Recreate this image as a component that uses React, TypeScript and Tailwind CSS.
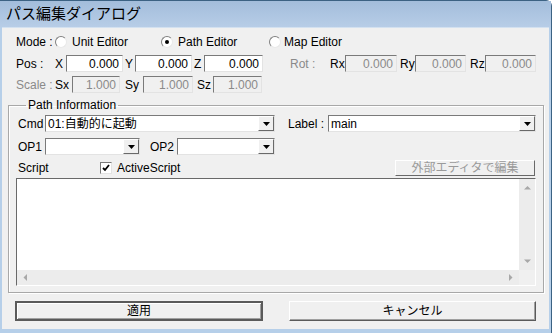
import React from "react";

const font = "font-['MS_UI_Gothic','Liberation_Sans','Noto_Sans_CJK_JP',sans-serif]";

const Radio = ({ checked }: { checked?: boolean }) => (
  <span className="flex h-[12px] w-[12px] items-center justify-center rounded-full border border-t-[#808080] border-l-[#808080] border-r-[#e8e8e8] border-b-[#e8e8e8] bg-white">
    {checked && <span className="h-[4px] w-[4px] rounded-full bg-black" />}
  </span>
);

const NumBox = ({ value, w, disabled }: { value: string; w: string; disabled?: boolean }) => (
  <div
    className={`flex h-[17px] items-center justify-end border border-t-[#7a7a7a] border-l-[#7a7a7a] border-r-[#e3e3e3] border-b-[#e3e3e3] pr-[3px] text-[12px] ${w} ${
      disabled ? "bg-[#f0f0f0] text-[#8a8a8a]" : "bg-white text-black"
    }`}
  >
    {value}
  </div>
);

const DropArrow = () => (
  <div className="flex h-[15px] w-[16px] items-center justify-center border border-t-[#ffffff] border-l-[#ffffff] border-r-[#696969] border-b-[#696969] bg-[#f0f0f0]">
    <svg width="7" height="4" viewBox="0 0 7 4">
      <path d="M0 0h7L3.5 4z" fill="#000" />
    </svg>
  </div>
);

const Combo = ({ value, w }: { value?: string; w: string }) => (
  <div className={`flex h-[17px] items-center border border-t-[#7a7a7a] border-l-[#7a7a7a] border-r-[#e3e3e3] border-b-[#e3e3e3] bg-white ${w}`}>
    <span className="flex-1 pl-[2px] text-[12px] leading-none text-black">{value}</span>
    <DropArrow />
  </div>
);

const Tri = ({ d }: { d: string }) => (
  <svg width="7" height="7" viewBox="0 0 7 7">
    <path d={d} fill="#a8a8a8" />
  </svg>
);

export default function App() {
  return (
    <div className={`flex h-[333px] w-[552px] flex-col rounded-tr-[6px] border-r border-t border-[#3c6283] bg-[#b6cfe9] ${font} text-[12px] text-black`}>
      {/* Title bar */}
      <div className="flex h-[26px] items-center bg-gradient-to-b from-[#a3bddb] to-[#b7cde7] pl-[6px] text-[15px]">
        パス編集ダイアログ
      </div>
      <div className="mx-[2px] mb-[4px] flex flex-1 flex-col border-t border-[#d3e1f0] bg-[#f0f0f0]">
        {/* Mode */}
        <div className="mt-[7px] flex h-[14px] items-center pl-[14px]">
          <span className="w-[39px]">Mode :</span>
          <Radio />
          <span className="ml-[5px] w-[89px]">Unit Editor</span>
          <Radio checked />
          <span className="ml-[5px] w-[91px]">Path Editor</span>
          <Radio />
          <span className="ml-[3px]">Map Editor</span>
        </div>
        {/* Pos / Rot */}
        <div className="mt-[6px] flex h-[17px] items-center pl-[14px]">
          <span className="w-[39px]">Pos :</span>
          <span className="w-[11px]">X</span>
          <NumBox value="0.000" w="w-[57px]" />
          <span className="w-[12px] pl-[2px]">Y</span>
          <NumBox value="0.000" w="w-[57px]" />
          <span className="w-[12px] pl-[2px]">Z</span>
          <NumBox value="0.000" w="w-[59px]" />
          <span className="w-[67px] pl-[27px] text-[#8a8a8a]">Rot :</span>
          <span className="w-[15px]">Rx</span>
          <NumBox value="0.000" disabled w="w-[52px]" />
          <span className="w-[18px] pl-[3px]">Ry</span>
          <NumBox value="0.000" disabled w="w-[51px]" />
          <span className="w-[19px] pl-[4px]">Rz</span>
          <NumBox value="0.000" disabled w="w-[51px]" />
        </div>
        {/* Scale */}
        <div className="mt-[4px] flex h-[17px] items-center pl-[14px]">
          <span className="w-[39px] text-[#8a8a8a]">Scale :</span>
          <span className="w-[17px]">Sx</span>
          <NumBox value="1.000" disabled w="w-[48px]" />
          <span className="w-[23px] pl-[5px]">Sy</span>
          <NumBox value="1.000" disabled w="w-[50px]" />
          <span className="w-[20px] pl-[4px]">Sz</span>
          <NumBox value="1.000" disabled w="w-[49px]" />
        </div>
        {/* Path Information */}
        <fieldset className="ml-[6px] mt-[5px] w-[536px] border border-[#a8a8a8] pb-[6px] pl-[9px] pr-[7px] pt-[3px] shadow-[inset_1px_1px_0_#fff,1px_1px_0_#fff]">
          <legend className="ml-[8px] px-[2px] leading-[14px]">Path Information</legend>
          <div className="flex h-[17px] items-center">
            <span className="w-[27px]">Cmd</span>
            <Combo value="01:自動的に起動" w="w-[230px]" />
            <span className="w-[53px] pl-[13px]">Label :</span>
            <Combo value="main" w="w-[208px]" />
          </div>
          <div className="mt-[6px] flex h-[17px] items-center">
            <span className="w-[27px]">OP1</span>
            <Combo w="w-[95px]" />
            <span className="w-[37px] pl-[10px]">OP2</span>
            <Combo w="w-[98px]" />
          </div>
          <div className="mt-[5px] flex h-[16px] items-center">
            <span className="w-[82px]">Script</span>
            <span className="flex h-[12px] w-[12px] items-center justify-center border border-t-[#7a7a7a] border-l-[#7a7a7a] border-r-[#e3e3e3] border-b-[#e3e3e3] bg-white">
              <svg width="8" height="8" viewBox="0 0 8 8">
                <path d="M1 4l2 2 4-5" stroke="#000" strokeWidth="1.8" fill="none" />
              </svg>
            </span>
            <span className="ml-[5px]">ActiveScript</span>
            <div className="ml-auto mr-[1px] flex h-[16px] w-[140px] items-center justify-center border border-t-[#ffffff] border-l-[#ffffff] border-r-[#696969] border-b-[#696969] bg-[#f0f0f0] text-[#9a9a9a]">
              外部エディタで編集
            </div>
          </div>
          <div className="-ml-[2px] mt-[2px] flex h-[108px] w-[520px] flex-col border border-t-[#696969] border-l-[#696969] border-r-[#ffffff] border-b-[#ffffff] bg-white">
            <div className="flex flex-1">
              <div className="flex-1 bg-white" />
              <div className="flex w-[16px] flex-col items-center justify-between bg-[#ececec] py-[5px]">
                <Tri d="M0 5.5L3.5 2 7 5.5z" />
                <Tri d="M0 1.5h7L3.5 5z" />
              </div>
            </div>
            <div className="flex h-[15px]">
              <div className="flex flex-1 items-center justify-between bg-[#ececec] px-[5px]">
                <Tri d="M5 0v7L1.5 3.5z" />
                <Tri d="M2 0v7l3.5-3.5z" />
              </div>
              <div className="w-[16px] bg-[#f0f0f0]" />
            </div>
          </div>
        </fieldset>
        {/* Buttons */}
        <div className="mt-[8px] flex pl-[13px]">
          <div className="flex h-[20px] w-[248px] items-center justify-center border-2 border-[#5a5a5a] bg-[#f0f0f0] shadow-[inset_1px_1px_0_#fff,inset_-1px_-1px_0_#a0a0a0]">
            適用
          </div>
          <div className="ml-[26px] flex h-[20px] w-[247px] items-center justify-center border border-t-[#ffffff] border-l-[#ffffff] border-r-[#5a5a5a] border-b-[#5a5a5a] bg-[#f0f0f0] shadow-[inset_-1px_-1px_0_#a0a0a0]">
            キャンセル
          </div>
        </div>
      </div>
    </div>
  );
}
